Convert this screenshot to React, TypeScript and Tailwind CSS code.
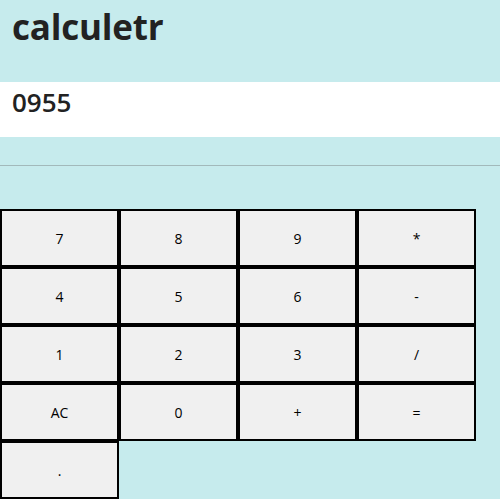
import { useState } from 'react';

const keys = ['7', '8', '9', '*', '4', '5', '6', '-', '1', '2', '3', '/', 'AC', '0', '+', '=', '.'];

export default function App() {
  const [value, setValue] = useState('0955');

  const press = (k: string) => {
    if (k === 'AC') return setValue('');
    if (k === '=') {
      try {
        // eslint-disable-next-line no-new-func
        setValue(String(Function(`return (${value})`)()));
      } catch {
        setValue('error');
      }
      return;
    }
    setValue(value + k);
  };

  return (
    <div className="min-h-[499px] bg-[#c6ebed] font-['Open_Sans','Noto_Sans',sans-serif] text-[#222]">
      {/* Header */}
      <div className="h-[82px] px-3 pt-[1px]">
        <h1 className="text-[35px] font-bold leading-[52px] tracking-[-0.2px]">calculetr</h1>
      </div>

      {/* Display */}
      <div className="h-[55px] bg-white px-3 pt-[2px]">
        <p className="text-[26px] font-semibold leading-[36px]">{value}</p>
      </div>

      <hr className="mt-[28px] border-t border-[#a2b9bb]" />

      {/* Keys */}
      <div className="mt-[43px] flex w-[476px] flex-wrap">
        {keys.map((k) => (
          <button
            key={k}
            onClick={() => press(k)}
            className="h-[58px] w-[119px] border-2 border-black bg-[#f0f0f0] text-[14px] text-black"
          >
            {k}
          </button>
        ))}
      </div>
    </div>
  );
}
